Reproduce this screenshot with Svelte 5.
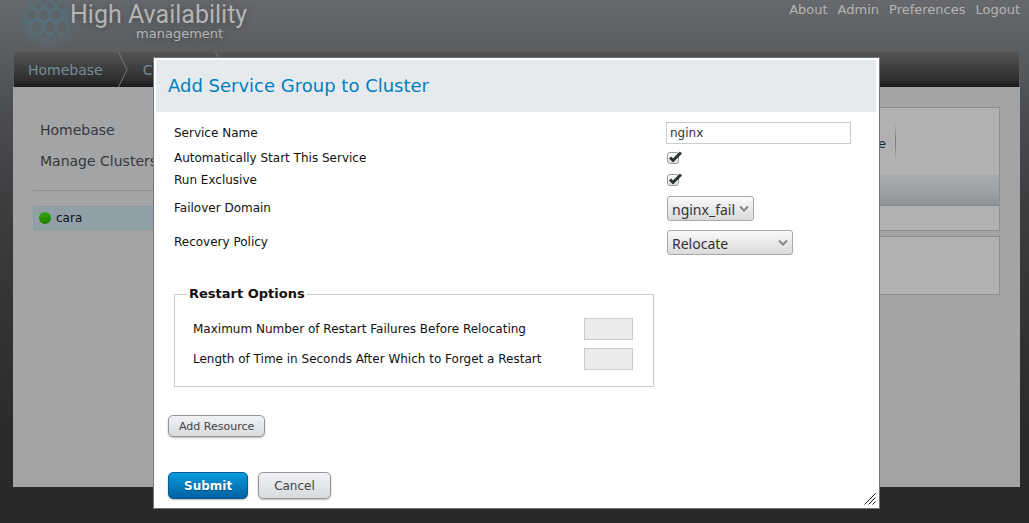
<script lang="ts">
	let serviceName = $state('nginx');
	let autoStart = $state(true);
	let exclusive = $state(true);
	let failoverDomain = $state('nginx_fail');
	let recoveryPolicy = $state('Relocate');
	let maxRestarts = $state('');
	let restartWindow = $state('');

	const userLinks = ['About', 'Admin', 'Preferences', 'Logout'];
	const crumbs = ['Homebase', 'Clusters'];

	// halftone dots of the logo: x, y, radius
	const dots = [
		[44, 1, 2], [56, 1, 2],
		[38, 6, 3], [50, 6, 3], [62, 6, 3],
		[32, 15, 4.5], [44, 15, 5], [56, 15, 5],
		[37, 27, 5], [50, 27, 5], [62, 27, 5],
		[44, 35, 3], [56, 35, 3], [68, 35, 2],
		[39, 40, 1], [51, 40, 2], [61, 40, 1]
	];
</script>

<div class="page">
	<header class="masthead">
		<div class="brand">
			<svg class="mark" width="96" height="51" viewBox="0 0 96 51" aria-hidden="true">
				<defs>
					<radialGradient id="glow">
						<stop offset="0" stop-color="#557380" />
						<stop offset="0.5" stop-color="#566f79" stop-opacity="0.9" />
						<stop offset="1" stop-color="#586a72" stop-opacity="0" />
					</radialGradient>
				</defs>
				<ellipse cx="48" cy="20" rx="33" ry="30" fill="url(#glow)" />
				{#each dots as [x, y, r]}
					<path
						d="M{x} {y - r - 1}Q{x + r} {y - r + 1} {x + r} {y + 1}Q{x + r} {y + r} {x} {y + r}Q{x - r} {y + r} {x - r} {y + 1}Q{x - r} {y - r + 1} {x} {y - r - 1}Z"
						fill="#5d6266"
					/>
				{/each}
			</svg>
			<div class="wordmark">
				<span class="product">High Availability</span>
				<span class="suffix">management</span>
			</div>
		</div>
		<nav class="user-links">
			{#each userLinks as link}
				<a href="#{link.toLowerCase()}">{link}</a>
			{/each}
		</nav>
	</header>

	<div class="shell">
		<nav class="crumbs">
			{#each crumbs as crumb}
				<a href="#{crumb.toLowerCase()}">{crumb}</a>
				<svg width="10" height="35" viewBox="0 0 10 35" aria-hidden="true">
					<path d="M0.5 0L9 17.5L0.5 35" fill="none" stroke="#777" />
				</svg>
			{/each}
		</nav>

		<div class="content">
			<aside class="sidebar">
				<nav class="side-nav">
					<a href="#home">Homebase</a>
					<a href="#manage">Manage Clusters</a>
				</nav>
				<a class="cluster" href="#cara"><span class="status"></span>cara</a>
			</aside>
			<main class="main">
				<section class="panel">
					<div class="toolbar"><a href="#remove">Remove</a></div>
					<div class="table-head"></div>
					<div class="table-body"></div>
				</section>
				<section class="panel details"></section>
			</main>
		</div>
	</div>
</div>

<div class="overlay">
	<div class="dialog" role="dialog" aria-labelledby="dialog-title">
		<h1 id="dialog-title">Add Service Group to Cluster</h1>
		<form onsubmit={(e) => e.preventDefault()}>
			<div class="fields">
				<div class="field text-row">
					<label for="service-name">Service Name</label>
					<input id="service-name" class="text" type="text" bind:value={serviceName} />
				</div>
				<div class="field check-row">
					<label for="auto-start">Automatically Start This Service</label>
					<span class="check">
						<input id="auto-start" type="checkbox" bind:checked={autoStart} />
						<svg width="16" height="13" viewBox="0 0 16 13" aria-hidden="true">
							<path d="M3 6.5L6 9.5L14 1.5" />
						</svg>
					</span>
				</div>
				<div class="field check-row">
					<label for="exclusive">Run Exclusive</label>
					<span class="check">
						<input id="exclusive" type="checkbox" bind:checked={exclusive} />
						<svg width="16" height="13" viewBox="0 0 16 13" aria-hidden="true">
							<path d="M3 6.5L6 9.5L14 1.5" />
						</svg>
					</span>
				</div>
				<div class="field select-row">
					<label for="failover">Failover Domain</label>
					<span class="select narrow">
						<select id="failover" bind:value={failoverDomain}>
							<option>nginx_fail</option>
						</select>
						<svg width="10" height="8" viewBox="0 0 10 8" aria-hidden="true">
							<path d="M1 1.5L5 5.5L9 1.5" />
						</svg>
					</span>
				</div>
				<div class="field select-row">
					<label for="recovery">Recovery Policy</label>
					<span class="select">
						<select id="recovery" bind:value={recoveryPolicy}>
							<option>Relocate</option>
						</select>
						<svg width="10" height="8" viewBox="0 0 10 8" aria-hidden="true">
							<path d="M1 1.5L5 5.5L9 1.5" />
						</svg>
					</span>
				</div>
			</div>

			<fieldset>
				<legend>Restart Options</legend>
				<div class="restart-row">
					<label for="max-restarts">Maximum Number of Restart Failures Before Relocating</label>
					<input id="max-restarts" class="text" type="text" disabled bind:value={maxRestarts} />
				</div>
				<div class="restart-row">
					<label for="restart-window">Length of Time in Seconds After Which to Forget a Restart</label>
					<input id="restart-window" class="text" type="text" disabled bind:value={restartWindow} />
				</div>
			</fieldset>

			<button class="btn small" type="button">Add Resource</button>
			<div class="actions">
				<button class="btn primary" type="submit">Submit</button>
				<button class="btn" type="button">Cancel</button>
			</div>
		</form>
		<svg class="grip" width="12" height="12" viewBox="0 0 12 12" aria-hidden="true">
			<path d="M0.5 11.5L11.5 0.5M4.5 11.5L11.5 4.5M8.5 11.5L11.5 8.5" stroke="#222" />
		</svg>
	</div>
</div>

<style>
	:global(body) {
		margin: 0;
		background: #27282a;
		font-family: 'DejaVu Sans', sans-serif;
		font-size: 12px;
	}
	a {
		color: inherit;
		text-decoration: none;
	}
	.page {
		min-height: 100vh;
		box-sizing: border-box;
		padding: 0 9px 36px 13px;
		background: linear-gradient(#66686d 0, #5a5e60 52px, #4b4d50 110px, #3d3e40 200px, #323335 320px, #292a2c 440px, #27282a 523px);
	}
	.masthead {
		display: flex;
		justify-content: space-between;
		height: 51px;
		color: #b4b4b4;
	}
	.brand {
		display: flex;
	}
	.mark {
		margin: 0 -26px 0 -13px;
	}
	.wordmark {
		display: flex;
		flex-direction: column;
		padding-top: 2px;
		text-shadow: 0 1px 6px #44484b;
	}
	.product {
		font-family: Roboto, sans-serif;
		font-size: 25px;
		line-height: 25px;
	}
	.suffix {
		align-self: flex-end;
		margin-right: 24px;
		font-size: 13px;
		line-height: 14px;
	}
	.user-links {
		display: flex;
		gap: 10px;
		font-size: 13px;
		line-height: 20px;
	}
	.crumbs {
		display: flex;
		align-items: center;
		gap: 15px;
		height: 35px;
		padding-left: 14px;
		border: 1px solid #5c5c5c;
		border-bottom: 0;
		background: linear-gradient(#555, #303030 75%, #1a1a1a);
		color: #738d99;
		font-size: 14px;
	}
	.content {
		display: flex;
		min-height: 400px;
		background: #a3a4a6;
	}
	.sidebar {
		width: 190px;
		padding: 28px 0 0 20px;
	}
	.side-nav {
		display: flex;
		flex-direction: column;
		margin-bottom: 15px;
		padding: 0 0 13px 7px;
		border-bottom: 1px solid #8e9092;
		color: #36383a;
		font-size: 14px;
		line-height: 31px;
	}
	.cluster {
		display: flex;
		align-items: center;
		gap: 5px;
		height: 22px;
		padding-left: 5px;
		border: 1px solid #879ba4;
		border-radius: 2px;
		background: #919fa6;
		color: #111;
	}
	.status {
		width: 12px;
		height: 12px;
		border-radius: 50%;
		background: linear-gradient(#35a90c, #1f7c00);
	}
	.main {
		flex: 1;
		display: flex;
		flex-direction: column;
		gap: 5px;
		padding: 20px 20px 0;
	}
	.panel {
		border: 1px solid #8c8f92;
		background: #b1b1b1;
	}
	.toolbar {
		display: flex;
		align-items: center;
		justify-content: flex-end;
		height: 67px;
		padding-right: 103px;
		color: #25282a;
		font-size: 13px;
	}
	.toolbar a {
		padding: 12px 9px 8px 0;
		border-right: 1px solid;
		border-image: linear-gradient(transparent, #75797b, transparent) 1;
	}
	.table-head {
		height: 30px;
		border-bottom: 1px solid #85898b;
		background: linear-gradient(#a5abae, #9ca1a4 60%, #8c9194);
	}
	.table-body {
		height: 24px;
	}
	.details {
		height: 57px;
	}

	.overlay {
		position: absolute;
		top: 0;
		left: 0;
		right: 0;
		padding: 57px 149px 14px 153px;
	}
	.dialog {
		position: relative;
		padding: 2px 3px 9px 2px;
		border: 1px solid #747677;
		background: #fff;
		color: #111;
	}
	h1 {
		margin: 0;
		padding: 0 12px;
		background: #e6eaed;
		color: #007fbf;
		font-size: 18px;
		font-weight: 400;
		line-height: 52px;
	}
	form {
		padding: 7px 12px 0;
	}
	.fields {
		padding-left: 6px;
	}
	.field {
		display: grid;
		grid-template-columns: 492px 1fr;
		align-items: center;
		line-height: 16px;
	}
	.text-row {
		height: 28px;
	}
	.check-row {
		height: 22px;
	}
	.select-row {
		height: 34px;
	}
	.text {
		box-sizing: border-box;
		width: 185px;
		height: 22px;
		margin: 0;
		padding: 0 3px;
		border: 1px solid #c8ccd0;
		border-radius: 0;
		background: #fff;
		color: #333;
		font: inherit;
	}
	.text:disabled {
		width: 49px;
		background: #ebebeb;
	}
	.check {
		display: flex;
		position: relative;
		margin-left: 1px;
	}
	.check input {
		appearance: none;
		box-sizing: border-box;
		width: 12px;
		height: 12px;
		margin: 0;
		border: 1px solid #9a9a9a;
		border-radius: 3px;
		background: linear-gradient(#fff, #e2e2e2);
	}
	.check svg {
		display: none;
		position: absolute;
		top: -1px;
		left: 0;
		pointer-events: none;
		fill: none;
		stroke: #2e3436;
		stroke-width: 3;
	}
	.check input:checked + svg {
		display: block;
	}
	.select {
		position: relative;
		width: 126px;
		margin-left: 1px;
	}
	.narrow {
		width: 87px;
	}
	select {
		appearance: none;
		display: block;
		box-sizing: border-box;
		width: 100%;
		height: 25px;
		margin: 0;
		padding: 3px 4px 0;
		border: 1px solid #a8a8a8;
		border-radius: 3px;
		background: linear-gradient(#fafafa, #dadada);
		color: #2e3436;
		font-family: 'Noto Sans', sans-serif;
		font-size: 14px;
		line-height: 20px;
	}
	.select svg {
		position: absolute;
		top: 9px;
		right: 5px;
		pointer-events: none;
		fill: none;
		stroke: #888a85;
		stroke-width: 2;
	}
	fieldset {
		box-sizing: border-box;
		width: 480px;
		margin: 27px 0 28px 6px;
		padding: 16px 20px 8px 18px;
		border: 1px solid #c8ccd0;
	}
	legend {
		margin-left: -6px;
		padding: 0 2px;
		font-size: 13px;
		font-weight: 700;
		line-height: 16px;
	}
	.restart-row {
		display: flex;
		align-items: center;
		justify-content: space-between;
		height: 22px;
		padding-bottom: 8px;
	}
	.btn {
		height: 27px;
		margin: 0;
		padding: 0 15px;
		border: 1px solid #949494;
		border-radius: 5px;
		background: linear-gradient(#f0f2f4, #d8dbde);
		box-shadow: 0 1px 2px #bbb;
		color: #444;
		font-family: inherit;
		font-size: 12px;
		cursor: pointer;
	}
	.small {
		display: block;
		height: 22px;
		padding: 0 10px;
		font-size: 11px;
	}
	.primary {
		border-color: #005a92;
		background: linear-gradient(#0a9be0, #0062a0);
		color: #fff;
		font-weight: 700;
		text-shadow: 0 1px 1px #004a78;
	}
	.actions {
		display: flex;
		gap: 10px;
		margin-top: 35px;
	}
	.grip {
		position: absolute;
		right: 3px;
		bottom: 3px;
	}
</style>
